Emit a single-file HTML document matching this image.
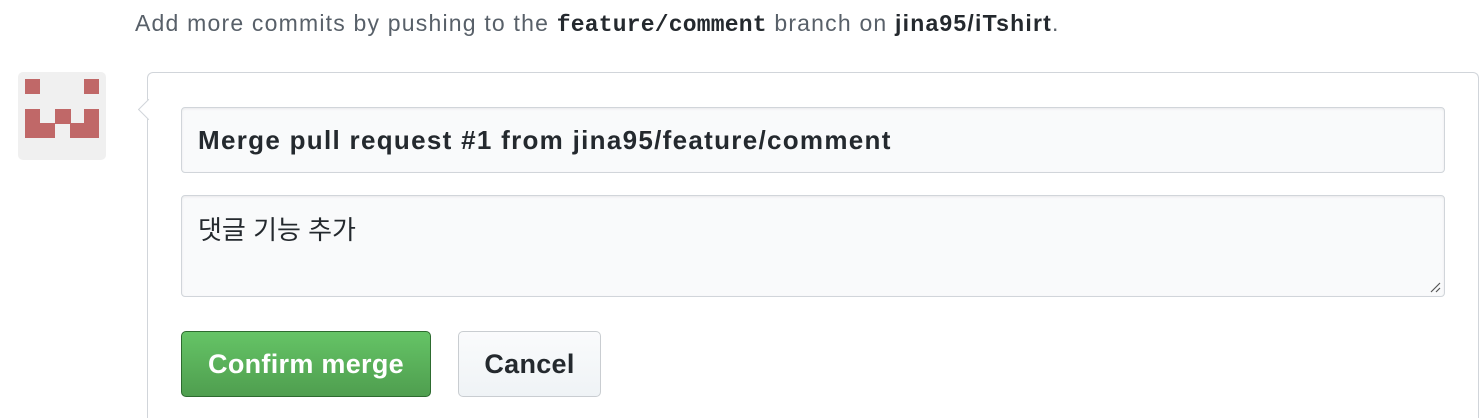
<!DOCTYPE html>
<html><head><meta charset="utf-8"><style>
html,body{margin:0;width:1482px;height:420px;overflow:hidden}
body{background:#fff;font-family:"Liberation Sans","Noto Sans CJK KR",sans-serif;position:relative;color:#24292e}
.top{position:absolute;left:135px;top:8px;font-size:23px;color:#586069;line-height:30px;letter-spacing:1.2px;white-space:nowrap}
.top code{font-family:"Liberation Mono",monospace;font-weight:bold;color:#24292e;font-size:23px;letter-spacing:0.2px}
.top b{color:#24292e}
.av{position:absolute;left:18px;top:72px;width:88px;height:88px;background:#f0f0f0;border-radius:5px}
.av i{position:absolute;background:#c06868}
.box{position:absolute;left:147px;top:72px;width:1330px;height:345px;border:1px solid #d1d5da;border-bottom:none;border-radius:6px 6px 0 0;background:#fff}
.arr{position:absolute;top:102px;width:14px;height:14px;background:#fff;border-left:1px solid #d1d5da;border-bottom:1px solid #d1d5da;transform:rotate(45deg);left:141px}
.in{position:absolute;left:181px;background:#f9fafb;border:1px solid #d1d5da;border-radius:4px;box-shadow:inset 0 1px 2px rgba(27,31,35,.075)}
.t1{top:107px;height:64px;font-weight:bold;font-size:26px;letter-spacing:1.3px;line-height:64px;padding-left:16px;width:1246px;white-space:nowrap}
.t2{top:195px;font-size:26px;padding:14px 0 0 16px;width:1246px;height:86px}
.btn{position:absolute;top:331px;height:64px;border-radius:5px;font-weight:bold;font-size:27px;line-height:64px;text-align:center;letter-spacing:0.3px}
.ok{left:181px;width:248px;background:linear-gradient(#65c466,#4f9e4f);border:1px solid #2d6b2f;color:#fff}
.no{left:458px;width:141px;background:linear-gradient(#fafbfc,#eff3f6);border:1px solid #c9cdd1;color:#24292e}
</style></head><body>
<div class="top">Add more commits by pushing to the <code>feature/comment</code> branch on <b>jina95/iTshirt</b>.</div>
<div class="av">
<i style="left:7px;top:7px;width:15px;height:15px"></i>
<i style="left:66px;top:7px;width:15px;height:15px"></i>
<i style="left:7px;top:37px;width:15px;height:29px"></i>
<i style="left:22px;top:51px;width:15px;height:15px"></i>
<i style="left:37px;top:37px;width:16px;height:15px"></i>
<i style="left:52px;top:51px;width:15px;height:15px"></i>
<i style="left:66px;top:37px;width:15px;height:29px"></i>
</div>
<div class="box"></div>
<div class="arr"></div>
<div class="in t1">Merge pull request #1 from jina95/feature/comment</div>
<div class="in t2">댓글 기능 추가
<svg style="position:absolute;right:3px;bottom:3px" width="12" height="12"><path d="M11 2L2 11M11 7L7 11" stroke="#555" stroke-width="1.2"/></svg></div>
<div class="btn ok">Confirm merge</div>
<div class="btn no">Cancel</div>
</body></html>
